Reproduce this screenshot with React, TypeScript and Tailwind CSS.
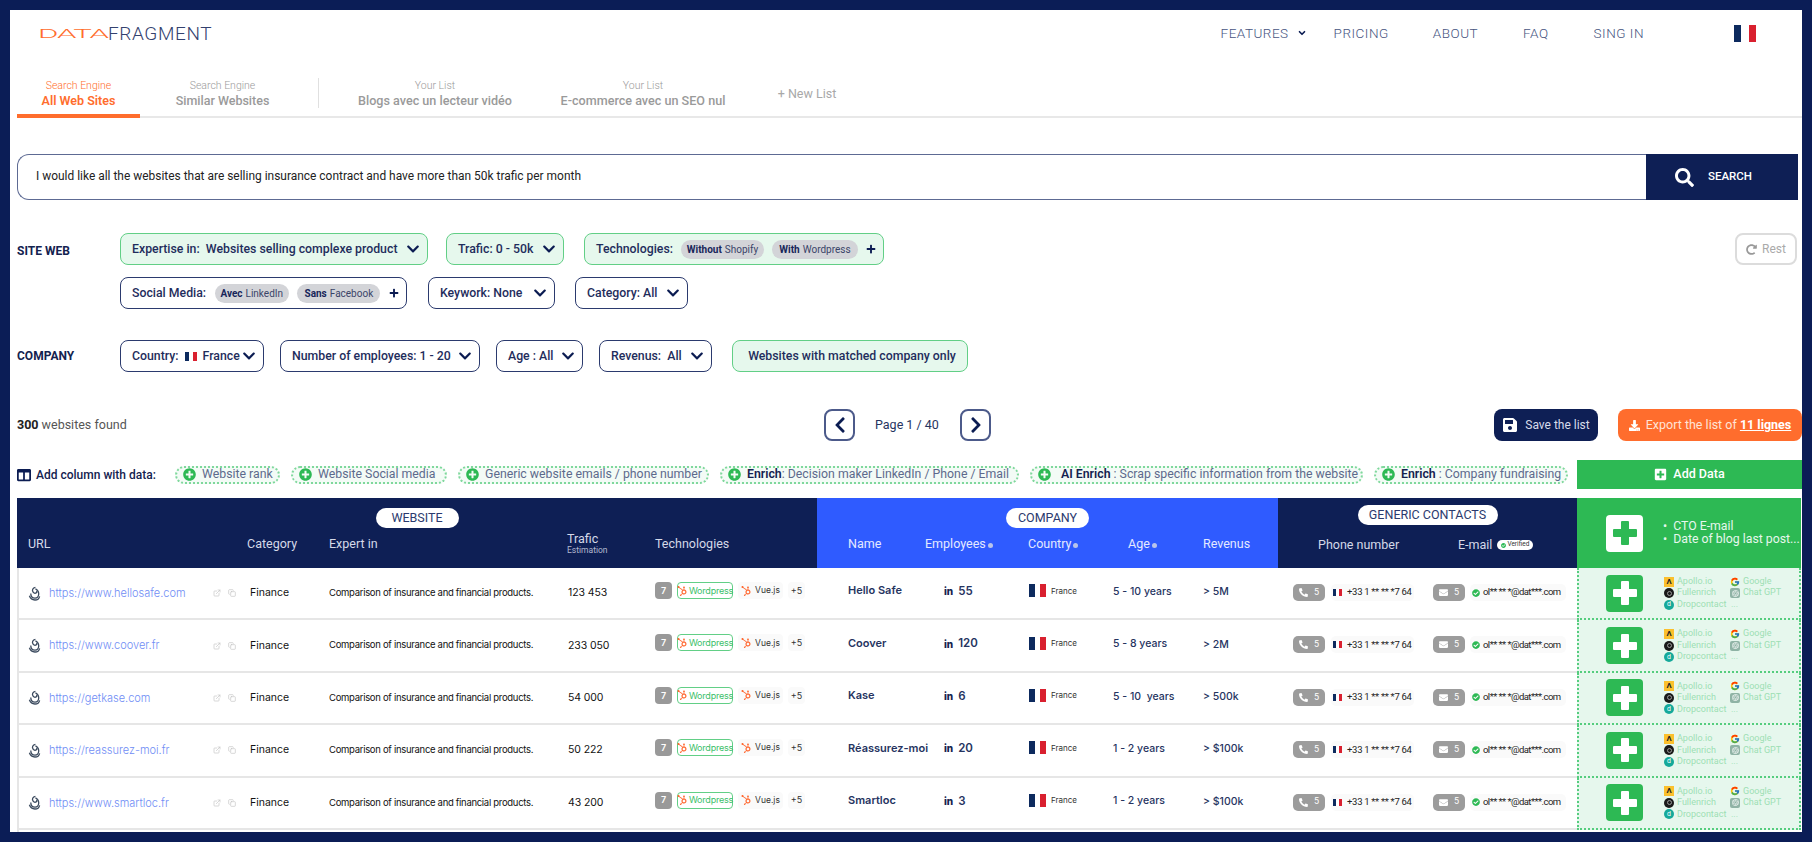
import { ChevronDown, Copy, ExternalLink } from "lucide-react";
import {
  FaCheckCircle,
  FaChevronDown,
  FaChevronLeft,
  FaChevronRight,
  FaColumns,
  FaDownload,
  FaEnvelope,
  FaHubspot,
  FaPhoneAlt,
  FaPlus,
  FaPlusCircle,
  FaPlusSquare,
  FaRedoAlt,
  FaSave,
  FaSearch,
} from "react-icons/fa";
import { FcGoogle } from "react-icons/fc";
import { SiOpenai } from "react-icons/si";

const col = {
  url: "w-[230px]",
  category: "w-[82px]",
  expert: "w-[238px]",
  trafic: "w-[88px]",
  tech: "w-[162px]",
  name: "w-[108px] pl-[31px]",
  employees: "w-[103px]",
  country: "w-[85px]",
  age: "w-[90px]",
  revenue: "w-[75px]",
  phone: "w-[155px]",
  email: "w-[144px]",
};

const sites = [
  { url: "https://www.hellosafe.com", trafic: "123 453", name: "Hello Safe", emp: "55", age: "5 - 10 years", rev: "> 5M" },
  { url: "https://www.coover.fr", trafic: "233 050", name: "Coover", emp: "120", age: "5 - 8 years", rev: "> 2M" },
  { url: "https://getkase.com", trafic: "54 000", name: "Kase", emp: "6", age: "5 - 10  years", rev: "> 500k" },
  { url: "https://reassurez-moi.fr", trafic: "50 222", name: "Réassurez-moi", emp: "20", age: "1 - 2 years", rev: "> $100k" },
  { url: "https://www.smartloc.fr", trafic: "43 200", name: "Smartloc", emp: "3", age: "1 - 2 years", rev: "> $100k" },
];

function Flag({ className }: { className: string }) {
  return (
    <span className={`flex shrink-0 ${className}`}>
      <span className="flex-1 bg-[#0d2a5e]" />
      <span className="flex-1 bg-white" />
      <span className="flex-1 bg-[#d9202f]" />
    </span>
  );
}

function Cross({ className }: { className: string }) {
  return (
    <svg viewBox="0 0 24 24" className={className} fill="currentColor">
      <rect x="8" y="0" width="8" height="24" rx="1" />
      <rect x="0" y="8" width="24" height="8" rx="1" />
    </svg>
  );
}

function Chip({ w, green, children }: { w: string; green?: boolean; children: React.ReactNode }) {
  return (
    <div
      className={`${w} h-[32px] flex items-center justify-between pl-[11px] pr-[7px] rounded-lg border-[1.5px] text-[12.300px] font-medium text-[#1f2d5c] whitespace-nowrap ${
        green ? "bg-[#e6f8ed] border-[#62cf86]" : "bg-white border-[#2b3a6e]"
      }`}
    >
      {children}
    </div>
  );
}

function Tag({ bold, text, w }: { bold: string; text: string; w: string }) {
  return (
    <span className={`${w} h-[19px] flex items-center justify-center rounded-full bg-[#d3d4d8] text-[10px] font-normal text-[#3a4468]`}>
      <b className="font-bold text-[#18265a] mr-[3px]">{bold}</b>
      {text}
    </span>
  );
}

const Chev = () => <FaChevronDown className="text-[#0b1c52] text-[14px] shrink-0" />;

function AddPill({ w, children }: { w: string; children: React.ReactNode }) {
  return (
    <div className={`${w} h-[18px] flex items-center gap-[6px] pl-[6px] rounded-full border-2 border-dotted border-[#7fd89c] bg-[#f3fbf6] text-[12.300px] text-[#5d6a8c] whitespace-nowrap`}>
      <FaPlusCircle className="text-[#2db954] text-[13px] shrink-0" />
      <span>{children}</span>
    </div>
  );
}

function SiteLogo() {
  return (
    <svg viewBox="0 0 14 16" className="w-[13px] h-[15px] shrink-0" fill="none" stroke="#3b4a5e" strokeWidth="1.4">
      <path d="M8 1.5C5 2 4 4.5 5.5 6.5S10 8 9.5 5" />
      <path d="M3 8c0 3 2 5 4.5 5S12 11 11.5 7.5C11 5 9.5 3.5 8 3" />
      <path d="M1.5 10.5C2.5 13.500 5 15 7.500 15s4.500-1.500 5-4" />
    </svg>
  );
}

function Provider({ icon, name }: { icon: React.ReactNode; name: string }) {
  return (
    <div className="flex items-center gap-[3px] h-[11.500px]">
      <span className="w-[10px] h-[10px] flex items-center justify-center shrink-0">{icon}</span>
      <span>{name}</span>
    </div>
  );
}

function Row({ site }: { site: (typeof sites)[number] }) {
  return (
    <div className="flex h-[52.400px] border-b-2 border-[#e6e6e6] [font-family:Inter,sans-serif]">
      <div className={`${col.url} flex items-center pl-[11px]`}>
        <SiteLogo />
        <span className="ml-[8px] w-[164px] text-[11px] text-[#6f8df5] font-light">{site.url}</span>
        <ExternalLink className="w-[8px] h-[8px] text-[#c4c4c4]" />
        <Copy className="w-[8px] h-[8px] text-[#c4c4c4] ml-[7px]" />
      </div>
      <div className={`${col.category} flex items-center pl-[3px] text-[10.500px] text-[#111]`}>Finance</div>
      <div className={`${col.expert} flex items-center text-[9.500px] tracking-[-0.3px] text-[#111] whitespace-nowrap`}>
        Comparison of insurance and financial products.
      </div>
      <div className={`${col.trafic} flex items-center pl-px text-[10.500px] tracking-[-0.1px] text-[#111]`}>{site.trafic}</div>
      <div className={`${col.tech} flex items-start pt-[14px] text-[9px]`}>
        <span className="w-[17px] h-[17px] flex items-center justify-center rounded-[4px] bg-[#999] text-white font-semibold">7</span>
        <span className="ml-[5px] w-[56px] h-[17px] flex items-center justify-center gap-[2px] rounded-[4px] border-[1.5px] border-[#62cf86] text-[#3cc06a] whitespace-nowrap">
          <FaHubspot className="text-[#ff6a33] text-[10px] shrink-0" />
          <span className="tracking-[-0.2px]">Wordpress</span>
        </span>
        <span className="ml-[5px] w-[45px] h-[17px] flex items-center justify-center gap-[4px] rounded-[4px] bg-[#fafafa] text-[8.500px] text-[#333]">
          <FaHubspot className="text-[#ff6a33] text-[10px] shrink-0" />
          Vue.js
        </span>
        <span className="ml-[5px] w-[17px] h-[17px] flex items-center justify-center rounded-[4px] bg-[#fafafa] text-[#333]">+5</span>
      </div>
      <div className={`${col.name} flex items-center pb-[5px] text-[11px] font-semibold text-[#26345f] whitespace-nowrap`}>{site.name}</div>
      <div className={`${col.employees} flex items-center pl-[19px] pb-[3px] text-[11.500px] font-semibold text-[#26345f]`}>
        <b className="text-[10px] font-extrabold text-[#14224f] mr-[5px]">in</b>
        {site.emp}
      </div>
      <div className={`${col.country} flex items-center pl-px pb-[5px]`}>
        <Flag className="w-[17px] h-[13px]" />
        <span className="ml-[5px] text-[8px] text-[#333]">France</span>
      </div>
      <div className={`${col.age} flex items-center pb-[3px] text-[10.500px] font-medium text-[#26345f] whitespace-pre`}>{site.age}</div>
      <div className={`${col.revenue} flex items-center pb-[2px] text-[10.500px] font-medium text-[#26345f]`}>{site.rev}</div>
      <div className={`${col.phone} flex items-start pt-[16px] pl-[15px] [font-family:Roboto,sans-serif]`}>
        <span className="w-[32px] h-[17px] flex items-center justify-center gap-[6px] rounded-[5px] bg-[#9c9c9c] text-white text-[9px]">
          <FaPhoneAlt className="text-[9px]" />5
        </span>
        <span className="ml-[6px] w-[83px] h-[17px] flex items-center gap-[5px] pl-[2px] rounded-[5px] bg-[#fafafa] text-[9.500px] tracking-[-0.3px] text-[#222] whitespace-nowrap">
          <Flag className="w-[9px] h-[7px]" />+33 1 ** ** *7 64
        </span>
      </div>
      <div className={`${col.email} flex items-start pt-[16px] [font-family:Roboto,sans-serif]`}>
        <span className="w-[32px] h-[17px] flex items-center justify-center gap-[6px] rounded-[5px] bg-[#9c9c9c] text-white text-[9px]">
          <FaEnvelope className="text-[9px]" />5
        </span>
        <span className="ml-[5px] w-[96px] h-[17px] flex items-center gap-[3px] pl-[2px] rounded-[5px] bg-[#fafafa] text-[9.500px] tracking-[-0.55px] text-[#222] whitespace-nowrap">
          <FaCheckCircle className="text-[#2db954] text-[8px] shrink-0" />
          ol** ** *@dat***.com
        </span>
      </div>
      <div className="w-[224px] flex items-center pl-[27px] bg-[#e6f7ed] border-x-2 border-b-2 -mb-[2px] border-dotted border-[#55cd7e] [font-family:Roboto,sans-serif]">
        <span className="w-[37px] h-[37px] flex items-center justify-center rounded-[4px] bg-[#2db954] text-white">
          <Cross className="w-[24px] h-[24px]" />
        </span>
        <div className="ml-[21px] grid grid-cols-[66px_60px] text-[9px] text-[#9ddfb4]">
          <Provider
            name="Apollo.io"
            icon={
              <span className="w-[10px] h-[10px] flex items-center justify-center bg-[#fbc02d] text-[#222] text-[8px] font-bold leading-none">Λ</span>
            }
          />
          <Provider name="Google" icon={<FcGoogle className="text-[10px]" />} />
          <Provider
            name="Fullenrich"
            icon={
              <span className="w-[10px] h-[10px] flex items-center justify-center rounded-full bg-[#1a1a1a]">
                <span className="w-[5px] h-[5px] rounded-full border border-[#9a9a9a]" />
              </span>
            }
          />
          <Provider
            name="Chat GPT"
            icon={
              <span className="w-[10px] h-[10px] flex items-center justify-center rounded-[2px] bg-[#8fb3a5]">
                <SiOpenai className="text-white text-[7px]" />
              </span>
            }
          />
          <Provider
            name="Dropcontact"
            icon={
              <span className="w-[10px] h-[10px] flex items-center justify-center rounded-full bg-[#15a99a] text-white text-[7px] leading-none">d</span>
            }
          />
          <span className="h-[11.500px] pl-[1px] leading-[11px]">...</span>
        </div>
      </div>
    </div>
  );
}

function HeadPill({ className, children }: { className: string; children: React.ReactNode }) {
  return (
    <span className={`h-[20px] flex items-center justify-center rounded-full bg-white text-[#2b3a6e] text-[12.500px] font-normal ${className}`}>
      {children}
    </span>
  );
}

const Dot = () => <span className="inline-block ml-[2px] w-[5px] h-[5px] rounded-full bg-[#b9c4ea]" />;

export default function App() {
  return (
    <div className="h-[842px] bg-[#0b1d56] p-[10px] overflow-hidden [font-family:Roboto,sans-serif]">
      <div className="h-[822px] bg-white overflow-hidden flex flex-col">
        {/* top nav */}
        <div className="h-[46px] shrink-0 flex items-center pl-[28px]">
          <span className="inline-block w-[70px] text-[13px] text-[#ff6d2d] origin-left scale-x-[2.4] tracking-[-0.5px] font-light leading-none">DATA</span>
          <span className="text-[19px] font-light text-[#33416e] tracking-[0.6px] leading-none">FRAGMENT</span>
          <nav className="ml-auto flex items-center text-[13.500px] font-light text-[#47557f] tracking-[0.5px]">
            <span>FEATURES</span>
            <ChevronDown className="w-[10px] h-[10px] ml-[8px] text-[#0b1c52]" strokeWidth={4} />
            <span className="ml-[27px]">PRICING</span>
            <span className="ml-[44px]">ABOUT</span>
            <span className="ml-[45px]">FAQ</span>
            <span className="ml-[45px]">SING IN</span>
            <Flag className="ml-[90px] mr-[46px] w-[22px] h-[17px]" />
          </nav>
        </div>

        {/* tabs */}
        <div className="mt-[22px] h-[40px] shrink-0 ml-[7px] flex border-b-2 border-[#e8e8e8] text-center">
          <div className="w-[123px] h-[40px] border-b-4 border-[#ff6d2d] text-[#ff6d2d]">
            <div className="text-[10.500px] font-light leading-[14px] mt-[1px]">Search Engine</div>
            <div className="text-[12.500px] font-semibold leading-[15px]">All Web Sites</div>
          </div>
          <div className="w-[165px] text-[#9a9a9a]">
            <div className="text-[10.500px] font-light leading-[14px] mt-[1px]">Search Engine</div>
            <div className="text-[12.500px] font-medium leading-[15px]">Similar Websites</div>
          </div>
          <div className="ml-[13px] w-px h-[30px] bg-[#e0e0e0]" />
          <div className="w-[232px] text-[#9a9a9a]">
            <div className="text-[10.500px] font-light leading-[14px] mt-[1px]">Your List</div>
            <div className="text-[12.600px] font-medium leading-[15px]">Blogs avec un lecteur vidéo</div>
          </div>
          <div className="w-[184px] text-[#9a9a9a]">
            <div className="text-[10.500px] font-light leading-[14px] mt-[1px]">Your List</div>
            <div className="text-[12.600px] font-medium leading-[15px] whitespace-nowrap">E-commerce avec un SEO nul</div>
          </div>
          <div className="w-[144px] text-[12.500px] text-[#a8a8a8] leading-[32px]">+ New List</div>
        </div>

        {/* search */}
        <div className="mt-[36px] ml-[7px] mr-[4px] h-[46px] shrink-0 flex">
          <div className="flex-1 flex items-center pl-[18px] rounded-l-xl border-[1.5px] border-r-0 border-[#5d6a93] text-[11.950px] text-[#222]">
            I would like all the websites that are selling insurance contract and have more than 50k trafic per month
          </div>
          <div className="w-[152px] flex items-center pl-[29px] gap-[14px] bg-[#0e1f55] text-white text-[11.500px] font-medium">
            <FaSearch className="text-[19px]" />
            SEARCH
          </div>
        </div>

        {/* filters */}
        <div className="mt-[33px] ml-[7px] mr-[5px] shrink-0 flex">
          <div className="w-[103px] pt-[9px] text-[12px] font-bold text-[#14224f]">SITE WEB</div>
          <div className="flex flex-col gap-[12px]">
            <div className="flex">
              <Chip w="w-[308px]" green>
                <span>Expertise in:&nbsp; Websites selling complexe product</span>
                <Chev />
              </Chip>
              <div className="ml-[18px]">
                <Chip w="w-[118px]" green>
                  <span>Trafic: 0 - 50k</span>
                  <Chev />
                </Chip>
              </div>
              <div className="ml-[20px]">
                <Chip w="w-[300px]" green>
                  <span>Technologies:</span>
                  <Tag bold="Without" text="Shopify" w="w-[83px]" />
                  <Tag bold="With" text="Wordpress" w="w-[86px]" />
                  <FaPlus className="text-[10px] text-[#0b1c52]" />
                </Chip>
              </div>
            </div>
            <div className="flex">
              <Chip w="w-[287px]">
                <span>Social Media:</span>
                <Tag bold="Avec" text="LinkedIn" w="w-[74px]" />
                <Tag bold="Sans" text="Facebook" w="w-[83px]" />
                <FaPlus className="text-[10px] text-[#0b1c52]" />
              </Chip>
              <div className="ml-[21px]">
                <Chip w="w-[127px]">
                  <span>Keywork: None</span>
                  <Chev />
                </Chip>
              </div>
              <div className="ml-[20px]">
                <Chip w="w-[113px]">
                  <span>Category: All</span>
                  <Chev />
                </Chip>
              </div>
            </div>
          </div>
          <div className="ml-auto w-[62px] h-[32px] flex items-center justify-center gap-[5px] rounded-lg border-2 border-[#dcdcdc] text-[12px] text-[#aaa]">
            <FaRedoAlt className="text-[11px] text-[#999]" />
            Rest
          </div>
        </div>

        <div className="mt-[31px] ml-[7px] shrink-0 flex items-center">
          <div className="w-[103px] text-[12px] font-bold text-[#14224f]">COMPANY</div>
          <div className="flex gap-[16px]">
            <Chip w="w-[144px]">
              <span className="flex items-center">
                Country:
                <Flag className="mx-[6px] w-[12px] h-[9px]" />
                France
              </span>
              <Chev />
            </Chip>
            <Chip w="w-[200px]">
              <span>Number of employees: 1 - 20</span>
              <Chev />
            </Chip>
            <Chip w="w-[87px]">
              <span>Age : All</span>
              <Chev />
            </Chip>
            <Chip w="w-[113px]">
              <span>Revenus:&nbsp; All</span>
              <Chev />
            </Chip>
            <div className="ml-[4px]">
              <Chip w="w-[236px]" green>
                <span className="mx-auto font-medium">Websites with matched company only</span>
              </Chip>
            </div>
          </div>
        </div>

        {/* result bar */}
        <div className="mt-[37px] ml-[7px] h-[32px] shrink-0 flex items-center">
          <div className="w-[807px] text-[12.500px] text-[#555]">
            <b className="font-bold text-[#222]">300</b> websites found
          </div>
          <button className="w-[31px] h-[32px] flex items-center justify-center rounded-lg border-2 border-[#4c5a8a] text-[#0b1c52]">
            <FaChevronLeft className="text-[18px]" />
          </button>
          <span className="ml-[20px] w-[85px] text-[12.500px] text-[#26345f] whitespace-nowrap">Page 1 / 40</span>
          <button className="w-[31px] h-[32px] flex items-center justify-center rounded-lg border-2 border-[#4c5a8a] text-[#0b1c52]">
            <FaChevronRight className="text-[18px]" />
          </button>
          <button className="ml-auto w-[104px] h-[32px] flex items-center justify-center gap-[7px] rounded-lg bg-[#0e1f55] text-[12px] text-[#d8dcea]">
            <FaSave className="text-[16px] text-white" />
            Save the list
          </button>
          <button className="ml-[20px] w-[184px] h-[32px] flex items-center justify-center gap-[6px] rounded-lg bg-[#ff6d2d] text-[12.500px] text-[#ffe3d6] whitespace-nowrap">
            <FaDownload className="text-[11px] text-white" />
            <span>
              Export the list of <b className="font-bold text-white underline">11 lignes</b>
            </span>
          </button>
        </div>

        {/* add columns */}
        <div className="mt-[19px] ml-[7px] h-[29px] shrink-0 flex items-center">
          <div className="w-[158px] flex items-center gap-[5px] text-[12px] font-medium text-[#14224f] whitespace-nowrap">
            <FaColumns className="text-[14px] text-[#0b1c52]" />
            Add column with data:
          </div>
          <div className="flex gap-[11px]">
            <AddPill w="w-[105px]">Website rank</AddPill>
            <AddPill w="w-[156px]">Website Social media</AddPill>
            <AddPill w="w-[251px]">Generic website emails / phone number</AddPill>
            <AddPill w="w-[299px]">
              <b className="font-semibold text-[#14224f]">Enrich</b>: Decision maker LinkedIn / Phone / Email
            </AddPill>
            <AddPill w="w-[333px]">
              <b className="font-semibold text-[#14224f] ml-[4px]">AI Enrich</b> : Scrap specific information from the website
            </AddPill>
            <AddPill w="w-[194px]">
              <b className="font-semibold text-[#14224f]">Enrich</b> : Company fundraising
            </AddPill>
          </div>
          <div className="ml-[9px] flex-1 h-[29px] flex items-center justify-center gap-[6px] bg-[#2db954] text-[12.500px] font-medium text-white">
            <FaPlusSquare className="text-[13px]" />
            Add Data
          </div>
        </div>

        {/* table */}
        <div className="mt-[9px] ml-[7px] mr-px flex-1 flex flex-col border-l-2 border-[#e6e6e6]">
          <div className="-ml-[2px] h-[70px] shrink-0 flex text-[12.500px] text-[#d5d9e8]">
            <div className="w-[800px] bg-[#0e1f55] flex flex-col items-center">
              <HeadPill className="mt-[10px] w-[83px]">WEBSITE</HeadPill>
              <div className="w-full mt-[7px] flex items-center h-[18px]">
                <span className={`${col.url} pl-[11px]`}>URL</span>
                <span className={col.category}>Category</span>
                <span className={col.expert}>Expert in</span>
                <span className={`${col.trafic} leading-[12px] mt-[1px]`}>
                  Trafic
                  <span className="block text-[8.500px] text-[#b3b9d0] leading-[11px]">Estimation</span>
                </span>
                <span className={col.tech}>Technologies</span>
              </div>
            </div>
            <div className="w-[461px] bg-[#2f5bff] flex flex-col items-center text-[#e4e9ff]">
              <HeadPill className="mt-[10px] w-[83px]">COMPANY</HeadPill>
              <div className="w-full mt-[7px] flex items-center h-[18px]">
                <span className={col.name}>Name</span>
                <span className={col.employees}>
                  Employees
                  <Dot />
                </span>
                <span className={col.country}>
                  Country
                  <Dot />
                </span>
                <span className={`${col.age} pl-[15px]`}>
                  Age
                  <Dot />
                </span>
                <span className={col.revenue}>Revenus</span>
              </div>
            </div>
            <div className="w-[299px] bg-[#0e1f55] flex flex-col items-center">
              <HeadPill className="mt-[7px] w-[140px]">GENERIC CONTACTS</HeadPill>
              <div className="w-full mt-[11px] flex items-center h-[18px]">
                <span className={`${col.phone} pl-[40px]`}>Phone number</span>
                <span className={`${col.email} pl-[25px] flex items-center`}>
                  E-mail
                  <span className="ml-[5px] w-[36px] h-[10px] flex items-center justify-center gap-[1px] rounded-full bg-white text-[6.500px] text-[#333]">
                    <FaCheckCircle className="text-[#2db954] text-[5px]" />
                    Verified
                  </span>
                </span>
              </div>
            </div>
            <div className="w-[224px] bg-[#2db954] flex items-center pl-[29px] text-[12.300px] text-[#e6f7ed]">
              <span className="w-[37px] h-[37px] flex items-center justify-center rounded-[4px] bg-white text-[#2db954]">
                <Cross className="w-[24px] h-[24px]" />
              </span>
              <ul className="ml-[20px] leading-[13px]">
                <li>
                  <span className="mr-[6px]">•</span>CTO E-mail
                </li>
                <li className="whitespace-nowrap">
                  <span className="mr-[6px]">•</span>Date of blog last post...
                </li>
              </ul>
            </div>
          </div>
          <div className="-ml-[2px]">
            {sites.map((s) => (
              <Row key={s.url} site={s} />
            ))}
          </div>
        </div>
      </div>
    </div>
  );
}
